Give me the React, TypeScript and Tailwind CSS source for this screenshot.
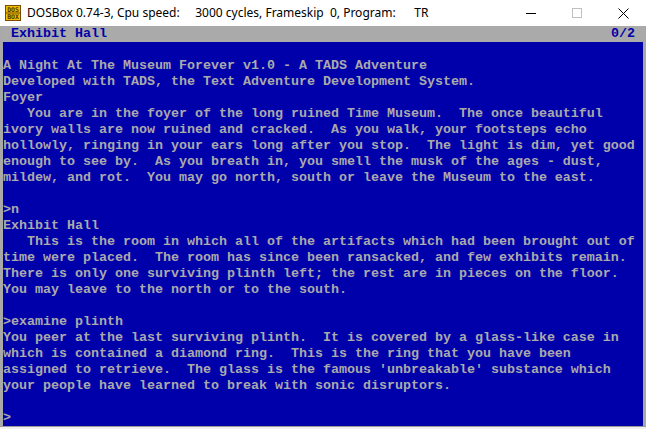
import React from 'react';

const lines: string[] = [
  '',
  'A Night At The Museum Forever v1.0 - A TADS Adventure',
  'Developed with TADS, the Text Adventure Development System.',
  'Foyer',
  '   You are in the foyer of the long ruined Time Museum.  The once beautiful',
  'ivory walls are now ruined and cracked.  As you walk, your footsteps echo',
  'hollowly, ringing in your ears long after you stop.  The light is dim, yet good',
  'enough to see by.  As you breath in, you smell the musk of the ages - dust,',
  'mildew, and rot.  You may go north, south or leave the Museum to the east.',
  '',
  '>n',
  'Exhibit Hall',
  '   This is the room in which all of the artifacts which had been brought out of',
  'time were placed.  The room has since been ransacked, and few exhibits remain.',
  'There is only one surviving plinth left; the rest are in pieces on the floor.',
  'You may leave to the north or to the south.',
  '',
  '>examine plinth',
  'You peer at the last surviving plinth.  It is covered by a glass-like case in',
  'which is contained a diamond ring.  This is the ring that you have been',
  "assigned to retrieve.  The glass is the famous 'unbreakable' substance which",
  'your people have learned to break with sonic disruptors.',
  '',
  '>',
];

const DosIcon = () => (
  <svg width="16" height="16" viewBox="0 0 16 16">
    <rect x="0" y="0" width="16" height="16" fill="#7a4a00" />
    <rect x="1" y="1" width="14" height="6.5" fill="#f0c000" />
    <rect x="1" y="8.5" width="14" height="6.5" fill="#f0c000" />
    <text x="8" y="6.8" fontSize="6.5" fontWeight="bold" textAnchor="middle" fill="#5a3000" fontFamily="DejaVu Sans Mono, monospace">DOS</text>
    <text x="8" y="14.3" fontSize="6.5" fontWeight="bold" textAnchor="middle" fill="#5a3000" fontFamily="DejaVu Sans Mono, monospace">BOX</text>
  </svg>
);

const TitleBar = () => (
  <div className="flex h-[26px] items-center bg-white">
    <div className="ml-[5px] mr-[6px] flex items-center">
      <DosIcon />
    </div>
    <div className="whitespace-pre text-[12px] text-black" style={{ fontFamily: '"Noto Sans", "Open Sans", sans-serif' }}>
      {'DOSBox 0.74-3, Cpu speed:     3000 cycles, Frameskip  0, Program:      TR'}
    </div>
    <div className="ml-auto flex h-full items-center">
      <div className="flex w-[46px] justify-center">
        <div className="h-px w-[10px] bg-black" />
      </div>
      <div className="flex w-[46px] justify-center">
        <div className="h-[10px] w-[10px] border border-[#c0c0c0]" />
      </div>
      <div className="flex w-[46px] justify-center">
        <svg width="11" height="11" viewBox="0 0 11 11">
          <path d="M0.5 0.5 L10.5 10.5 M10.5 0.5 L0.5 10.5" stroke="#000" strokeWidth="1" />
        </svg>
      </div>
    </div>
  </div>
);

const dosFont = { fontFamily: '"Liberation Mono", "DejaVu Sans Mono", monospace' };

export default function App() {
  return (
    <div className="flex h-[429px] w-[646px] flex-col overflow-hidden bg-white">
      <TitleBar />
      <div className="flex">
        <div className="w-[3px] bg-[#a9a9a9]" />
        <div className="h-[400px] w-[640px] bg-[#0000aa] text-[13.333px] font-bold leading-[16px] text-[#aaaaaa]" style={dosFont}>
          <div className="flex h-[16px] justify-between whitespace-pre bg-[#aaaaaa] text-[#0000aa]">
            <span>{' Exhibit Hall'}</span>
            <span>{'0/2 '}</span>
          </div>
          {lines.map((line, i) => (
            <div key={i} className="h-[16px] whitespace-pre">
              {line}
            </div>
          ))}
        </div>
        <div className="w-[3px] bg-[#a9a9a9]" />
      </div>
      <div className="h-[1px] bg-[#9a9a9a]" />
      <div className="flex-1 bg-[#f0f0f0]" />
    </div>
  );
}
